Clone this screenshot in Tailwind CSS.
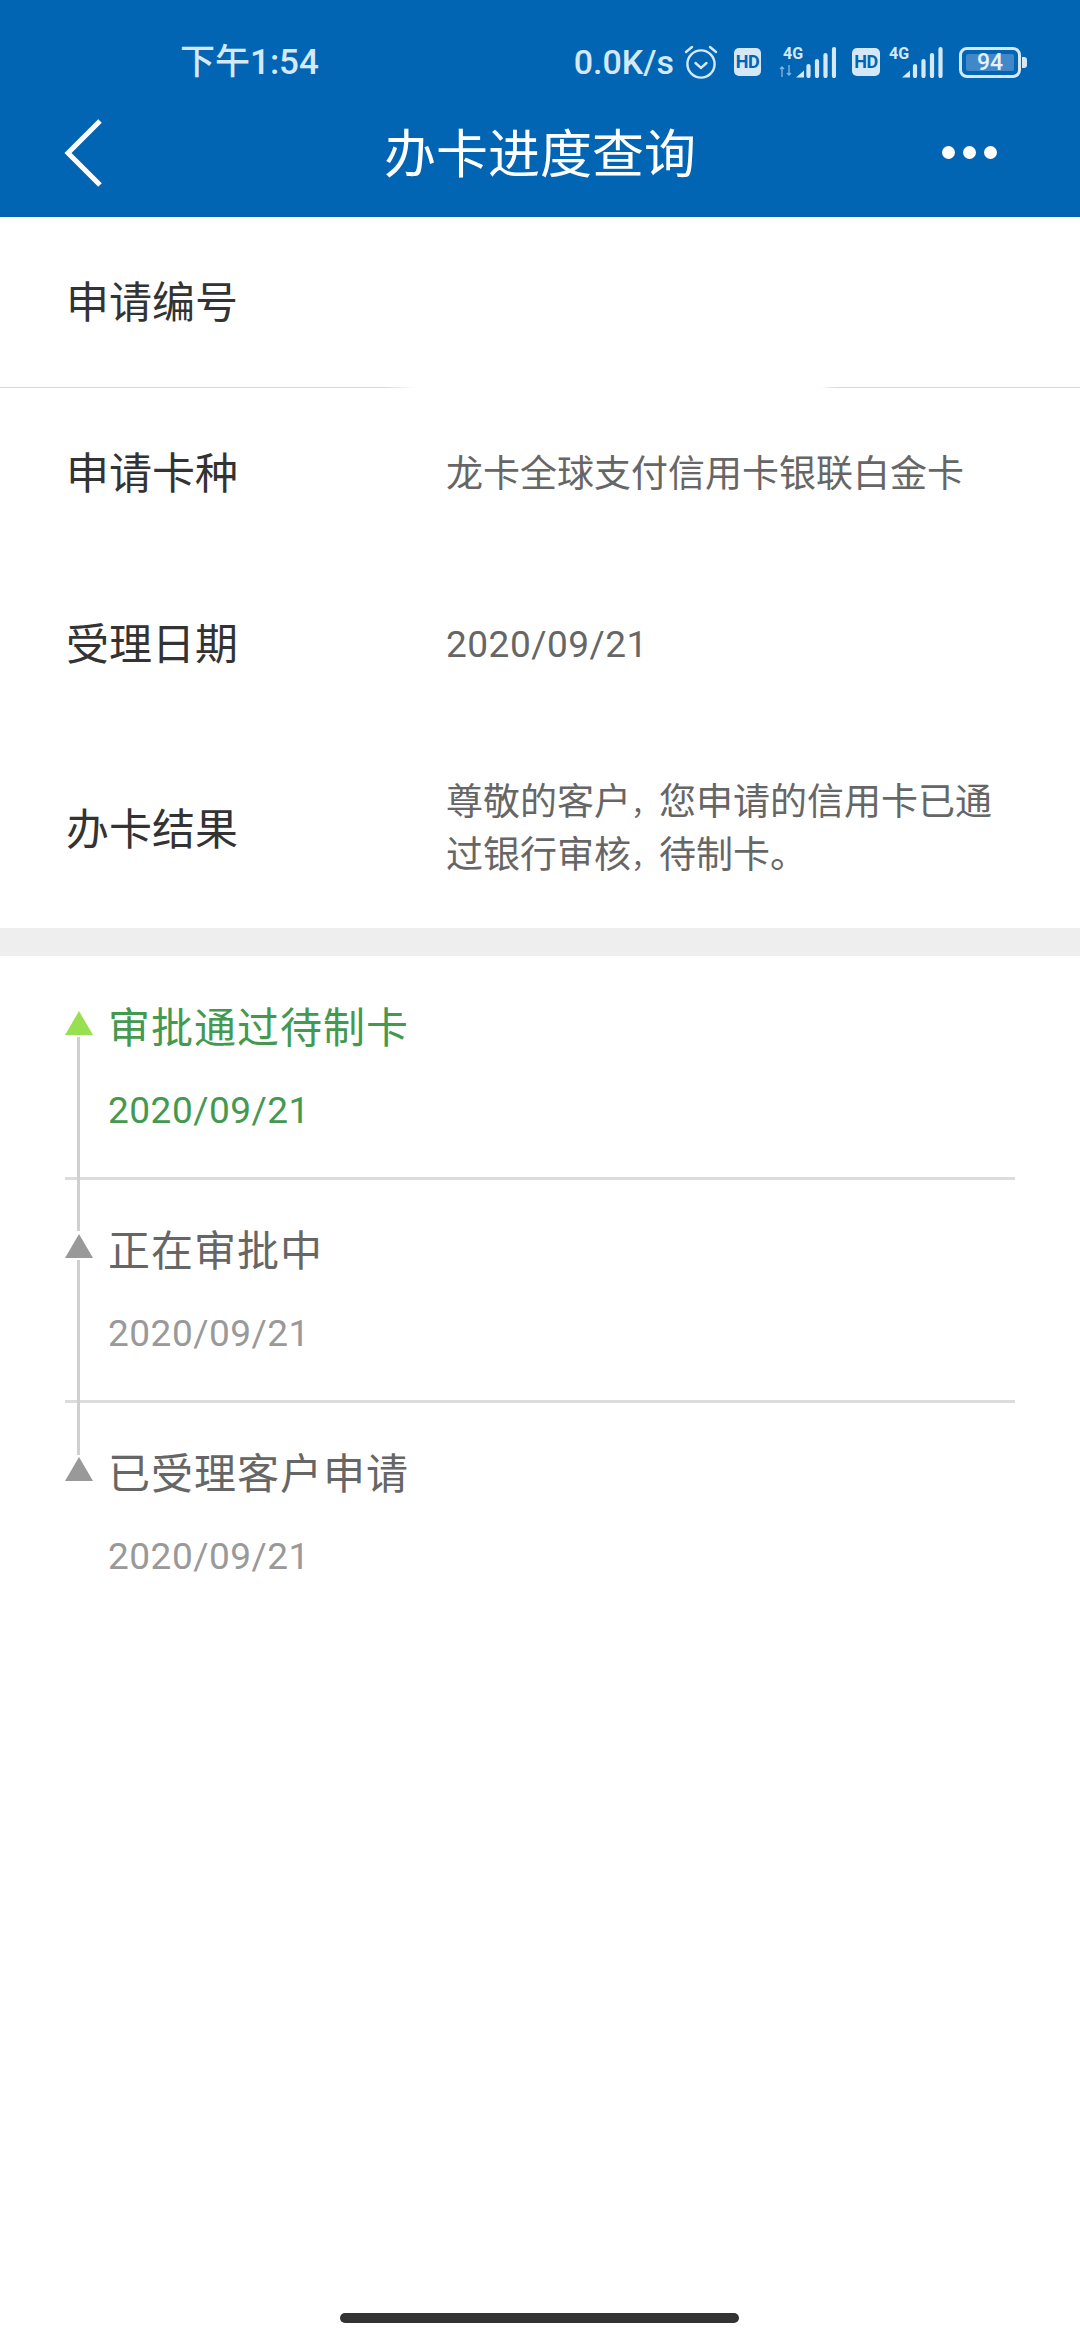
<!DOCTYPE html>
<html lang="zh-CN">
<head>
    <meta charset="UTF-8">
    <meta name="viewport" content="width=device-width, initial-scale=1.0">
    <title>办卡进度查询</title>
    <script src="https://cdn.jsdelivr.net/npm/@tailwindcss/browser@4"></script>
</head>
<body class="bg-white font-['Roboto','Noto_Sans_CJK_SC',sans-serif]">
<div class="relative w-[1080px] h-[2340px] overflow-hidden bg-white flex flex-col">

    <!-- status bar + nav -->
    <header class="bg-[#0265b3] h-[217px] shrink-0 flex flex-col">
        <div class="h-[60px] mt-[32px] flex items-center text-[#d5e8f8]">
            <span class="ml-[180px] text-[35px] font-medium leading-none">下午1:54</span>
            <div class="ml-auto mr-[53px] flex items-center h-[40px]">
                <span class="text-[34px] font-medium leading-none">0.0K/s</span>
                <svg class="ml-[10px]" width="34" height="36" viewBox="0 0 34 36" fill="none" stroke="#d5e8f8" stroke-width="2.4" stroke-linecap="round">
                    <circle cx="17" cy="20" r="13.6"/>
                    <path d="M11.500 19l5.500 5 5.500-5"/>
                    <path d="M2 8l6-5M32 8l-6-5"/>
                </svg>
                <span class="ml-[16px] w-[27px] h-[28px] rounded-[5px] bg-[#d5e8f8] text-[#0265b3] text-[18px] font-bold leading-[28px] text-center tracking-[-0.5px]">HD</span>
                <div class="ml-[18px] relative w-[57px] h-[32px]">
                    <span class="absolute left-[4px] top-0 text-[16px] font-bold leading-none">4G</span>
                    <svg class="absolute left-0 top-0" width="57" height="32" viewBox="0 0 57 32" fill="none">
                        <path d="M3 31V21M1 23l2-2 2 2M10 19v10M8 27l2 2 2-2" stroke="#7fb2dc" stroke-width="1.4"/>
                        <path d="M17 31.500l8-7v7z" fill="#d5e8f8"/>
                        <path d="M29.500 30V20M38 30V15M46.500 30V9M55 30V3" stroke="#d5e8f8" stroke-width="4.200" stroke-linecap="round"/>
                    </svg>
                </div>
                <span class="ml-[16px] w-[28px] h-[28px] rounded-[5px] bg-[#d5e8f8] text-[#0265b3] text-[18px] font-bold leading-[28px] text-center tracking-[-0.5px]">HD</span>
                <div class="ml-[9px] relative w-[54px] h-[32px]">
                    <span class="absolute left-0 top-0 text-[16px] font-bold leading-none">4G</span>
                    <svg class="absolute left-0 top-0" width="54" height="32" viewBox="0 0 54 32" fill="none">
                        <path d="M13 31.500l8-7v7z" fill="#d5e8f8"/>
                        <path d="M26 30V20M34.500 30V15M43 30V9M51.500 30V3" stroke="#d5e8f8" stroke-width="4.200" stroke-linecap="round"/>
                    </svg>
                </div>
                <div class="ml-[16px] w-[62px] h-[31px] rounded-[8px] border-[3px] border-[#d5e8f8] p-[4px]">
                    <div class="h-full rounded-[2px] bg-[#4188c8] text-[23px] font-medium leading-[17px] text-center text-[#e6f2fb]">94</div>
                </div>
                <span class="ml-[1px] w-[5px] h-[11px] rounded-r-[3px] bg-[#d5e8f8]"></span>
            </div>
        </div>
        <div class="relative flex-1 flex items-center justify-center">
            <svg class="absolute left-[62px] top-[25px]" width="44" height="72" viewBox="0 0 44 72" fill="none" stroke="#fff" stroke-width="5">
                <path d="M38 4L6 36l32 32"/>
            </svg>
            <h1 class="text-white text-[52px] font-normal leading-none mt-[2px]">办卡进度查询</h1>
            <div class="absolute left-[942px] top-[54px] flex gap-[8px]">
                <span class="w-[13px] h-[13px] rounded-full bg-white"></span>
                <span class="w-[13px] h-[13px] rounded-full bg-white"></span>
                <span class="w-[13px] h-[13px] rounded-full bg-white"></span>
            </div>
        </div>
    </header>

    <!-- details -->
    <section class="shrink-0">
        <div class="h-[170px] flex items-center pl-[66px] pt-[2px]">
            <span class="text-[43px] text-[#333]">申请编号</span>
        </div>
        <div class="h-[1px] bg-[linear-gradient(to_right,#d8d8d8_0,#d8d8d8_385px,#fff_415px,#fff_820px,#d8d8d8_835px)]"></div>
        <div class="h-[171px] flex items-center pl-[66px] pt-[2px]">
            <span class="w-[380px] text-[43px] text-[#333]">申请卡种</span>
            <span class="text-[37px] text-[#666]">龙卡全球支付信用卡银联白金卡</span>
        </div>
        <div class="h-[170px] flex items-center pl-[66px] pt-[2px]">
            <span class="w-[380px] text-[43px] text-[#333]">受理日期</span>
            <span class="text-[37px] tracking-[0.5px] text-[#666]">2020/09/21</span>
        </div>
        <div class="h-[199px] flex items-center pl-[66px] pt-[4px]">
            <span class="w-[380px] text-[43px] text-[#333]">办卡结果</span>
            <div class="w-[560px] text-[37px] leading-[50px] text-[#666]">
                <p>尊敬的客户<span class="text-[28px]">，</span>您申请的信用卡已通</p>
                <p>过银行审核<span class="text-[28px]">，</span>待制卡。</p>
            </div>
        </div>
    </section>
    <div class="h-[28px] bg-[#eeeeee] shrink-0"></div>

    <!-- timeline -->
    <section class="relative px-[65px]">
        <span class="absolute left-[77px] top-[81px] w-[3px] h-[194px] bg-[#d0d0d0]"></span>
        <span class="absolute left-[77px] top-[304px] w-[3px] h-[195px] bg-[#d0d0d0]"></span>

        <div class="h-[224px] pt-[55px] border-b-[3px] border-[#dcdcdc]">
            <div class="flex items-start">
                <svg width="28" height="24" viewBox="0 0 28 24" class="shrink-0"><path d="M14 0l14 24H0z" fill="#97e04f"/></svg>
                <span class="ml-[15px] text-[42px] tracking-[1px] text-[#43994f] leading-[36px]">审批通过待制卡</span>
            </div>
            <div class="ml-[43px] mt-[36px] text-[37px] tracking-[0.5px] leading-[56px] text-[#43994f]">2020/09/21</div>
        </div>
        <div class="h-[223px] pt-[54px] border-b-[3px] border-[#dcdcdc]">
            <div class="flex items-start">
                <svg width="28" height="24" viewBox="0 0 28 24" class="shrink-0"><path d="M14 0l14 24H0z" fill="#999"/></svg>
                <span class="ml-[15px] text-[42px] tracking-[1px] text-[#666] leading-[36px]">正在审批中</span>
            </div>
            <div class="ml-[43px] mt-[36px] text-[37px] tracking-[0.5px] leading-[56px] text-[#999]">2020/09/21</div>
        </div>
        <div class="h-[223px] pt-[54px]">
            <div class="flex items-start">
                <svg width="28" height="24" viewBox="0 0 28 24" class="shrink-0"><path d="M14 0l14 24H0z" fill="#999"/></svg>
                <span class="ml-[15px] text-[42px] tracking-[1px] text-[#666] leading-[36px]">已受理客户申请</span>
            </div>
            <div class="ml-[43px] mt-[36px] text-[37px] tracking-[0.5px] leading-[56px] text-[#999]">2020/09/21</div>
        </div>
    </section>

    <!-- home indicator -->
    <div class="absolute left-[340px] top-[2313px] w-[399px] h-[10px] rounded-[5px] bg-[#333]"></div>
</div>
</body>
</html>
